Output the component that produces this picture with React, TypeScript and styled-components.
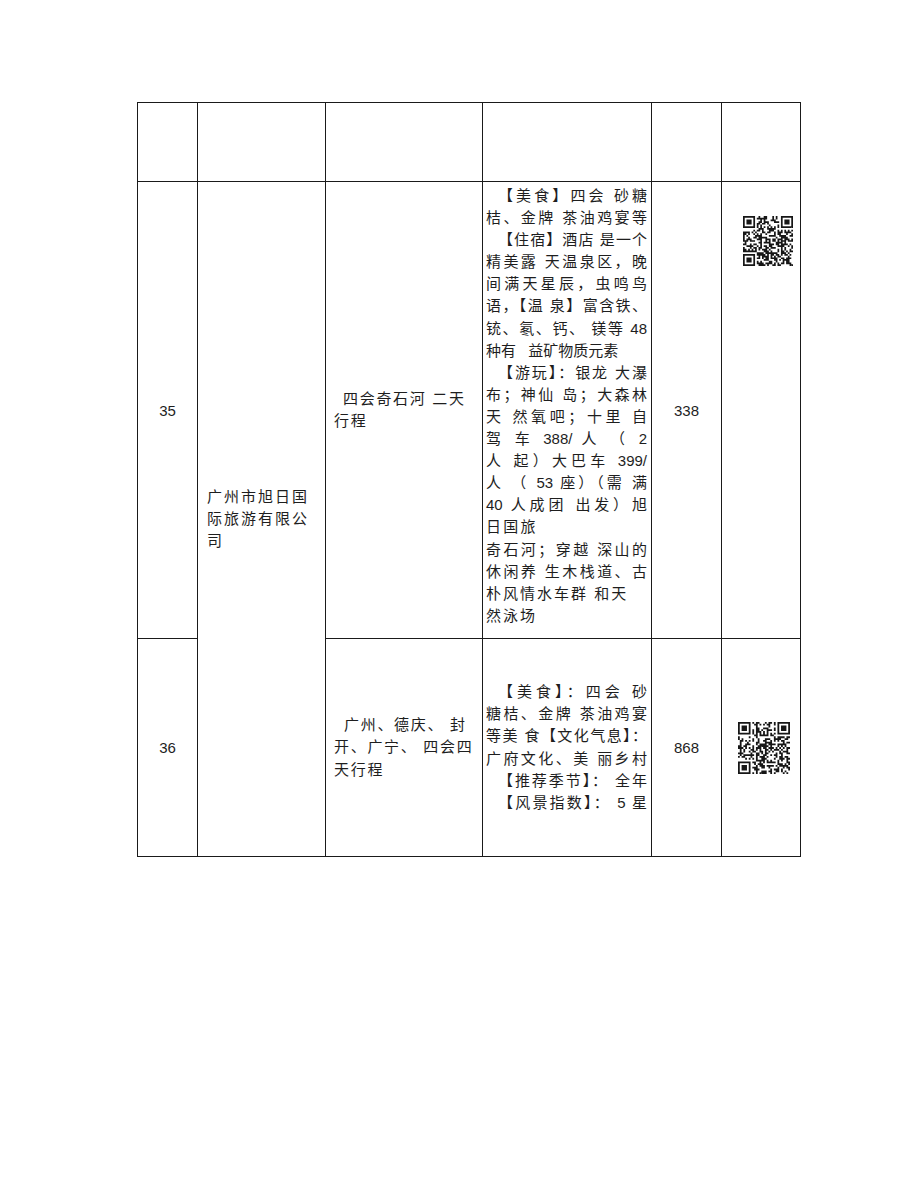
import React from "react";
import styled, { createGlobalStyle } from "styled-components";

const GlobalStyle = createGlobalStyle`
  html, body {
    margin: 0;
    padding: 0;
    background: #ffffff;
  }
`;

type DescLine = { t: string; j?: boolean; indent?: number; ls?: number; ws?: number };

const row35Desc: DescLine[] = [
  { t: "【美食】四会 砂糖", j: true, indent: 12 },
  { t: "桔、金牌 茶油鸡宴等", j: true },
  { t: "【住宿】酒店 是一个", j: true, indent: 12 },
  { t: "精美露 天温泉区，晚", j: true },
  { t: "间满天星辰，虫鸣鸟", j: true },
  { t: "语，【温 泉】富含铁、", j: true },
  { t: "铳、氡、钙、 镁等 48", j: true },
  { t: "种有 益矿物质元素", ws: 8 },
  { t: "【游玩】：银龙 大瀑", j: true, indent: 12 },
  { t: "布；神仙 岛；大森林", j: true },
  { t: "天 然氧吧；十里 自", j: true },
  { t: "驾 车 388/ 人 （ 2", j: true },
  { t: "人 起）大巴车 399/", j: true },
  { t: "人 （ 53 座）（需 满", j: true },
  { t: "40 人成团 出发）旭", j: true },
  { t: "日国旅", ls: 2.2 },
  { t: "奇石河；穿越 深山的", j: true },
  { t: "休闲养 生木栈道、古", j: true },
  { t: "朴风情水车群 和天", ls: 2 },
  { t: "然泳场", ls: 2 },
];

const row36Desc: DescLine[] = [
  { t: "【美食】：四会 砂", j: true, indent: 12 },
  { t: "糖桔、金牌 茶油鸡宴", j: true },
  { t: "等美 食【文化气息】：", j: true },
  { t: "广府文化、美 丽乡村", j: true },
  { t: "【推荐季节】： 全年", j: true, indent: 12 },
  { t: "【风景指数】： 5 星", j: true, indent: 12 },
];

// fake qr pattern, seeded so it stays the same between renders
function makeQr(seed: number, n: number): boolean[][] {
  let s = seed;
  const rnd = () => {
    s = (s * 1103515245 + 12345) & 0x7fffffff;
    return s / 0x7fffffff;
  };
  const m: boolean[][] = [];
  for (let y = 0; y < n; y++) {
    const row: boolean[] = [];
    for (let x = 0; x < n; x++) row.push(rnd() > 0.5);
    m.push(row);
  }
  const finder = (r: number, c: number) => {
    for (let dy = -1; dy <= 7; dy++) {
      for (let dx = -1; dx <= 7; dx++) {
        const y = r + dy;
        const x = c + dx;
        if (y < 0 || x < 0 || y >= n || x >= n) continue;
        const ring = dy === 0 || dy === 6 || dx === 0 || dx === 6;
        const inner = dy >= 2 && dy <= 4 && dx >= 2 && dx <= 4;
        const inside = dy >= 0 && dy <= 6 && dx >= 0 && dx <= 6;
        m[y][x] = inside && (ring || inner);
      }
    }
  };
  finder(0, 0);
  finder(0, n - 7);
  finder(n - 7, 0);
  for (let i = 8; i < n - 8; i++) {
    m[6][i] = i % 2 === 0;
    m[i][6] = i % 2 === 0;
  }
  return m;
}

const QrCode: React.FC<{ seed: number; size: number }> = ({ seed, size }) => {
  const n = 29;
  const m = makeQr(seed, n);
  let d = "";
  m.forEach((row, y) =>
    row.forEach((on, x) => {
      if (on) d += `M${x} ${y}h1v1h-1z`;
    })
  );
  return (
    <svg width={size} height={size} viewBox={`0 0 ${n} ${n}`}>
      <path d={d} fill="#161616" />
    </svg>
  );
};

const DescLines: React.FC<{ lines: DescLine[] }> = ({ lines }) => (
  <>
    {lines.map((l, i) => (
      <Line key={i} $justify={l.j} $indent={l.indent} $ls={l.ls} $ws={l.ws}>
        {l.t}
      </Line>
    ))}
  </>
);

const App: React.FC = () => {
  return (
    <>
      <GlobalStyle />
      <Page>
        <Sheet>
          <colgroup>
            <col style={{ width: 60 }} />
            <col style={{ width: 128 }} />
            <col style={{ width: 157 }} />
            <col style={{ width: 169 }} />
            <col style={{ width: 70 }} />
            <col style={{ width: 79 }} />
          </colgroup>
          <tbody>
            <TourRow $h={79}>
              <Cell />
              <Cell />
              <Cell />
              <Cell />
              <Cell />
              <Cell />
            </TourRow>
            <TourRow $h={457}>
              <NumCell>35</NumCell>
              <CompanyCell rowSpan={2}>
                <Line>广州市旭日国</Line>
                <Line>际旅游有限公</Line>
                <Line>司</Line>
              </CompanyCell>
              <RouteCell>
                <Line $indent={9}>四会奇石河 二天</Line>
                <Line>行程</Line>
              </RouteCell>
              <DescCell $top={3}>
                <DescLines lines={row35Desc} />
              </DescCell>
              <NumCell>338</NumCell>
              <QrCell $top={34} $left={21}>
                <QrCode seed={35} size={50} />
              </QrCell>
            </TourRow>
            <TourRow $h={218}>
              <NumCell>36</NumCell>
              <RouteCell>
                <Line $indent={10}>广州、德庆、 封</Line>
                <Line>开、广宁、 四会四</Line>
                <Line>天行程</Line>
              </RouteCell>
              <DescCell>
                <DescLines lines={row36Desc} />
              </DescCell>
              <NumCell>868</NumCell>
              <QrCell $left={16}>
                <QrCode seed={36} size={52} />
              </QrCell>
            </TourRow>
          </tbody>
        </Sheet>
      </Page>
    </>
  );
};

const Page = styled.div`
  padding: 102px 0 0 137px;
  min-height: 1193px;
  box-sizing: border-box;
`;

const Sheet = styled.table`
  border-collapse: collapse;
  table-layout: fixed;
  width: 664px;
  font-family: "Liberation Sans", "Noto Sans CJK SC", sans-serif;
  font-size: 15px;
  color: #1e1e1e;
`;

const TourRow = styled.tr<{ $h: number }>`
  height: ${(p) => p.$h}px;
`;

const Cell = styled.td`
  border: 1px solid #1a1a1a;
  padding: 0;
  vertical-align: middle;
`;

const NumCell = styled(Cell)`
  text-align: center;
`;

const CompanyCell = styled(Cell)`
  padding-left: 9px;
  letter-spacing: 2px;
`;

const RouteCell = styled(Cell)`
  padding-left: 8px;
  letter-spacing: 1.7px;
`;

const DescCell = styled(Cell)<{ $top?: number }>`
  padding: 0 4px 0 3px;
  vertical-align: ${(p) => (p.$top !== undefined ? "top" : "middle")};
  padding-top: ${(p) => p.$top ?? 0}px;
`;

const QrCell = styled(Cell)<{ $top?: number; $left: number }>`
  vertical-align: ${(p) => (p.$top !== undefined ? "top" : "middle")};
  padding-top: ${(p) => p.$top ?? 0}px;
  padding-left: ${(p) => p.$left}px;

  svg {
    display: block;
  }
`;

const Line = styled.div<{ $justify?: boolean; $indent?: number; $ls?: number; $ws?: number }>`
  line-height: 22.1px;
  padding-left: ${(p) => p.$indent ?? 0}px;
  text-align: ${(p) => (p.$justify ? "justify" : "left")};
  text-align-last: ${(p) => (p.$justify ? "justify" : "auto")};
  white-space: ${(p) => (p.$justify ? "normal" : "nowrap")};
  ${(p) => (p.$ls !== undefined ? `letter-spacing: ${p.$ls}px;` : "")}
  ${(p) => (p.$ws !== undefined ? `word-spacing: ${p.$ws}px;` : "")}
`;

export default App;
